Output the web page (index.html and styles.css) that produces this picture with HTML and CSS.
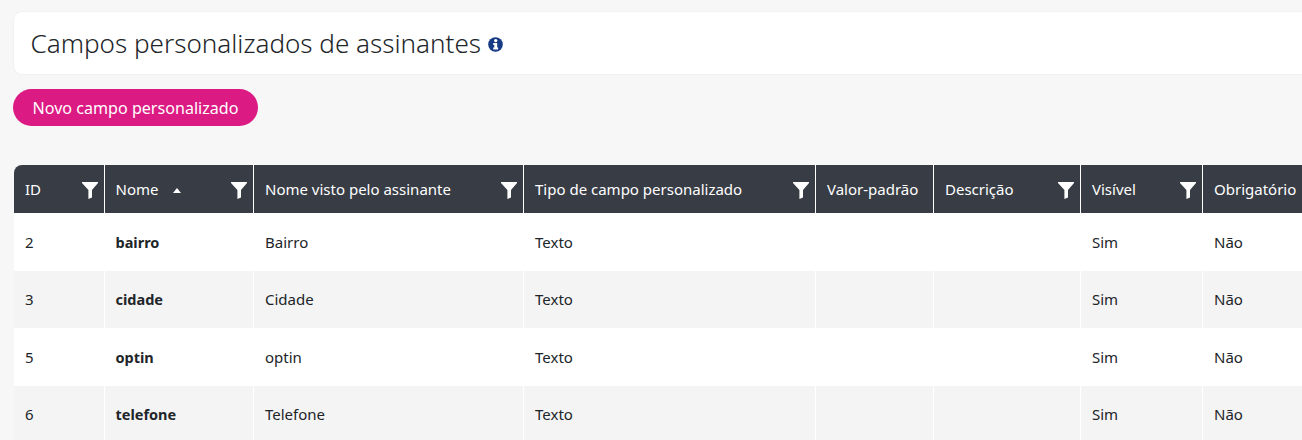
FILE: index.html
```html
<!DOCTYPE html>
<html lang="pt">
<head>
<meta charset="utf-8">
<title>Campos personalizados de assinantes</title>
<link rel="stylesheet" href="styles.css">
</head>
<body>
<svg class="defs" width="0" height="0" aria-hidden="true"><symbol id="funnel" viewBox="0 0 16 17"><path d="M0 0H16V1L10 8V15.5L6.4 17V8L0 1Z" fill="#fff"/></symbol></svg>
<main class="page">
  <header class="card">
    <h1 class="title">Campos personalizados de assinantes</h1>
    <svg class="info" viewBox="0 0 16 16" aria-hidden="true"><circle cx="8" cy="8" r="7.8" fill="#173a85"/><circle cx="8.2" cy="3.8" r="1.8" fill="#fff"/><path d="M5.6 6.5H9.8V11.3H10.8V13.2H5.6V11.3H6.7V8.4H5.6Z" fill="#fff"/></svg>
  </header>
  <button class="primary">Novo campo personalizado</button>
  <table class="grid">
    <colgroup>
      <col class="c1"><col class="c2"><col class="c3"><col class="c4"><col class="c5"><col class="c6"><col class="c7"><col class="c8">
    </colgroup>
    <thead>
      <tr>
        <th><div class="th">ID<svg class="funnel"><use href="#funnel"/></svg></div></th>
        <th><div class="th"><span>Nome<span class="sort"></span></span><svg class="funnel"><use href="#funnel"/></svg></div></th>
        <th><div class="th">Nome visto pelo assinante<svg class="funnel"><use href="#funnel"/></svg></div></th>
        <th><div class="th">Tipo de campo personalizado<svg class="funnel"><use href="#funnel"/></svg></div></th>
        <th><div class="th">Valor-padrão</div></th>
        <th><div class="th">Descrição<svg class="funnel"><use href="#funnel"/></svg></div></th>
        <th><div class="th">Visível<svg class="funnel"><use href="#funnel"/></svg></div></th>
        <th><div class="th">Obrigatório</div></th>
      </tr>
    </thead>
    <tbody>
      <tr class="r1"><td>2</td><td><b>bairro</b></td><td>Bairro</td><td>Texto</td><td></td><td></td><td>Sim</td><td>Não</td></tr>
      <tr class="r2"><td>3</td><td><b>cidade</b></td><td>Cidade</td><td>Texto</td><td></td><td></td><td>Sim</td><td>Não</td></tr>
      <tr class="r1"><td>5</td><td><b>optin</b></td><td>optin</td><td>Texto</td><td></td><td></td><td>Sim</td><td>Não</td></tr>
      <tr class="r2"><td>6</td><td><b>telefone</b></td><td>Telefone</td><td>Texto</td><td></td><td></td><td>Sim</td><td>Não</td></tr>
    </tbody>
  </table>
</main>
</body>
</html>
```
FILE: styles.css
```css
* { box-sizing: border-box; }
html, body { margin: 0; height: 100%; overflow: hidden; }
body { background: #f7f7f7; font-family: "Noto Sans", "Open Sans", sans-serif; color: #212529; font-size: 15px; }
.defs { position: absolute; }
.page { width: 1340px; padding: 12px 0 0 14px; }
.card { display: flex; align-items: center; gap: 7px; height: 62px; padding: 0 17px 0 16.5px; background: #fff; border-radius: 8px; box-shadow: 0 0 2px rgba(0,0,0,.08); }
.title { margin: 0; font-size: 26.05px; font-weight: 300; color: #212529; }
.info { width: 15px; height: 15px; margin-top: 3px; }
.primary { display: block; width: 245px; height: 37px; margin: 15px 0 39px -1px; border: 0; border-radius: 19px; background: #dc1a83; color: #fff; font: inherit; font-size: 16.1px; padding: 0; }
.grid { table-layout: fixed; width: 1324px; border-collapse: collapse; }
.c1 { width: 90px; } .c2 { width: 149.5px; } .c3 { width: 270px; } .c4 { width: 292px; }
.c5 { width: 118px; } .c6 { width: 147px; } .c7 { width: 122px; } .c8 { width: 135.5px; }
th { height: 48px; padding: 0; background: #383c45; color: #fff; font-weight: 400; text-align: left; border-right: 1px solid #fff; }
th:first-child { border-top-left-radius: 8px; }
.th { display: flex; align-items: center; justify-content: space-between; padding: 0 6px 0 11px; font-size: 15px; }
.funnel { width: 16px; height: 17px; margin-top: 2px; }
.sort { display: inline-block; width: 0; height: 0; margin: 0 0 2px 15px; border: 4px solid transparent; border-top: 0; border-bottom: 5px solid #fff; }
td { height: 57.5px; padding: 0 11px; border-right: 1px solid #fff; }
.r1 { background: #fff; }
.r2 { background: #f4f4f4; }
b { font-weight: 700; font-size: 14.5px; }
```
